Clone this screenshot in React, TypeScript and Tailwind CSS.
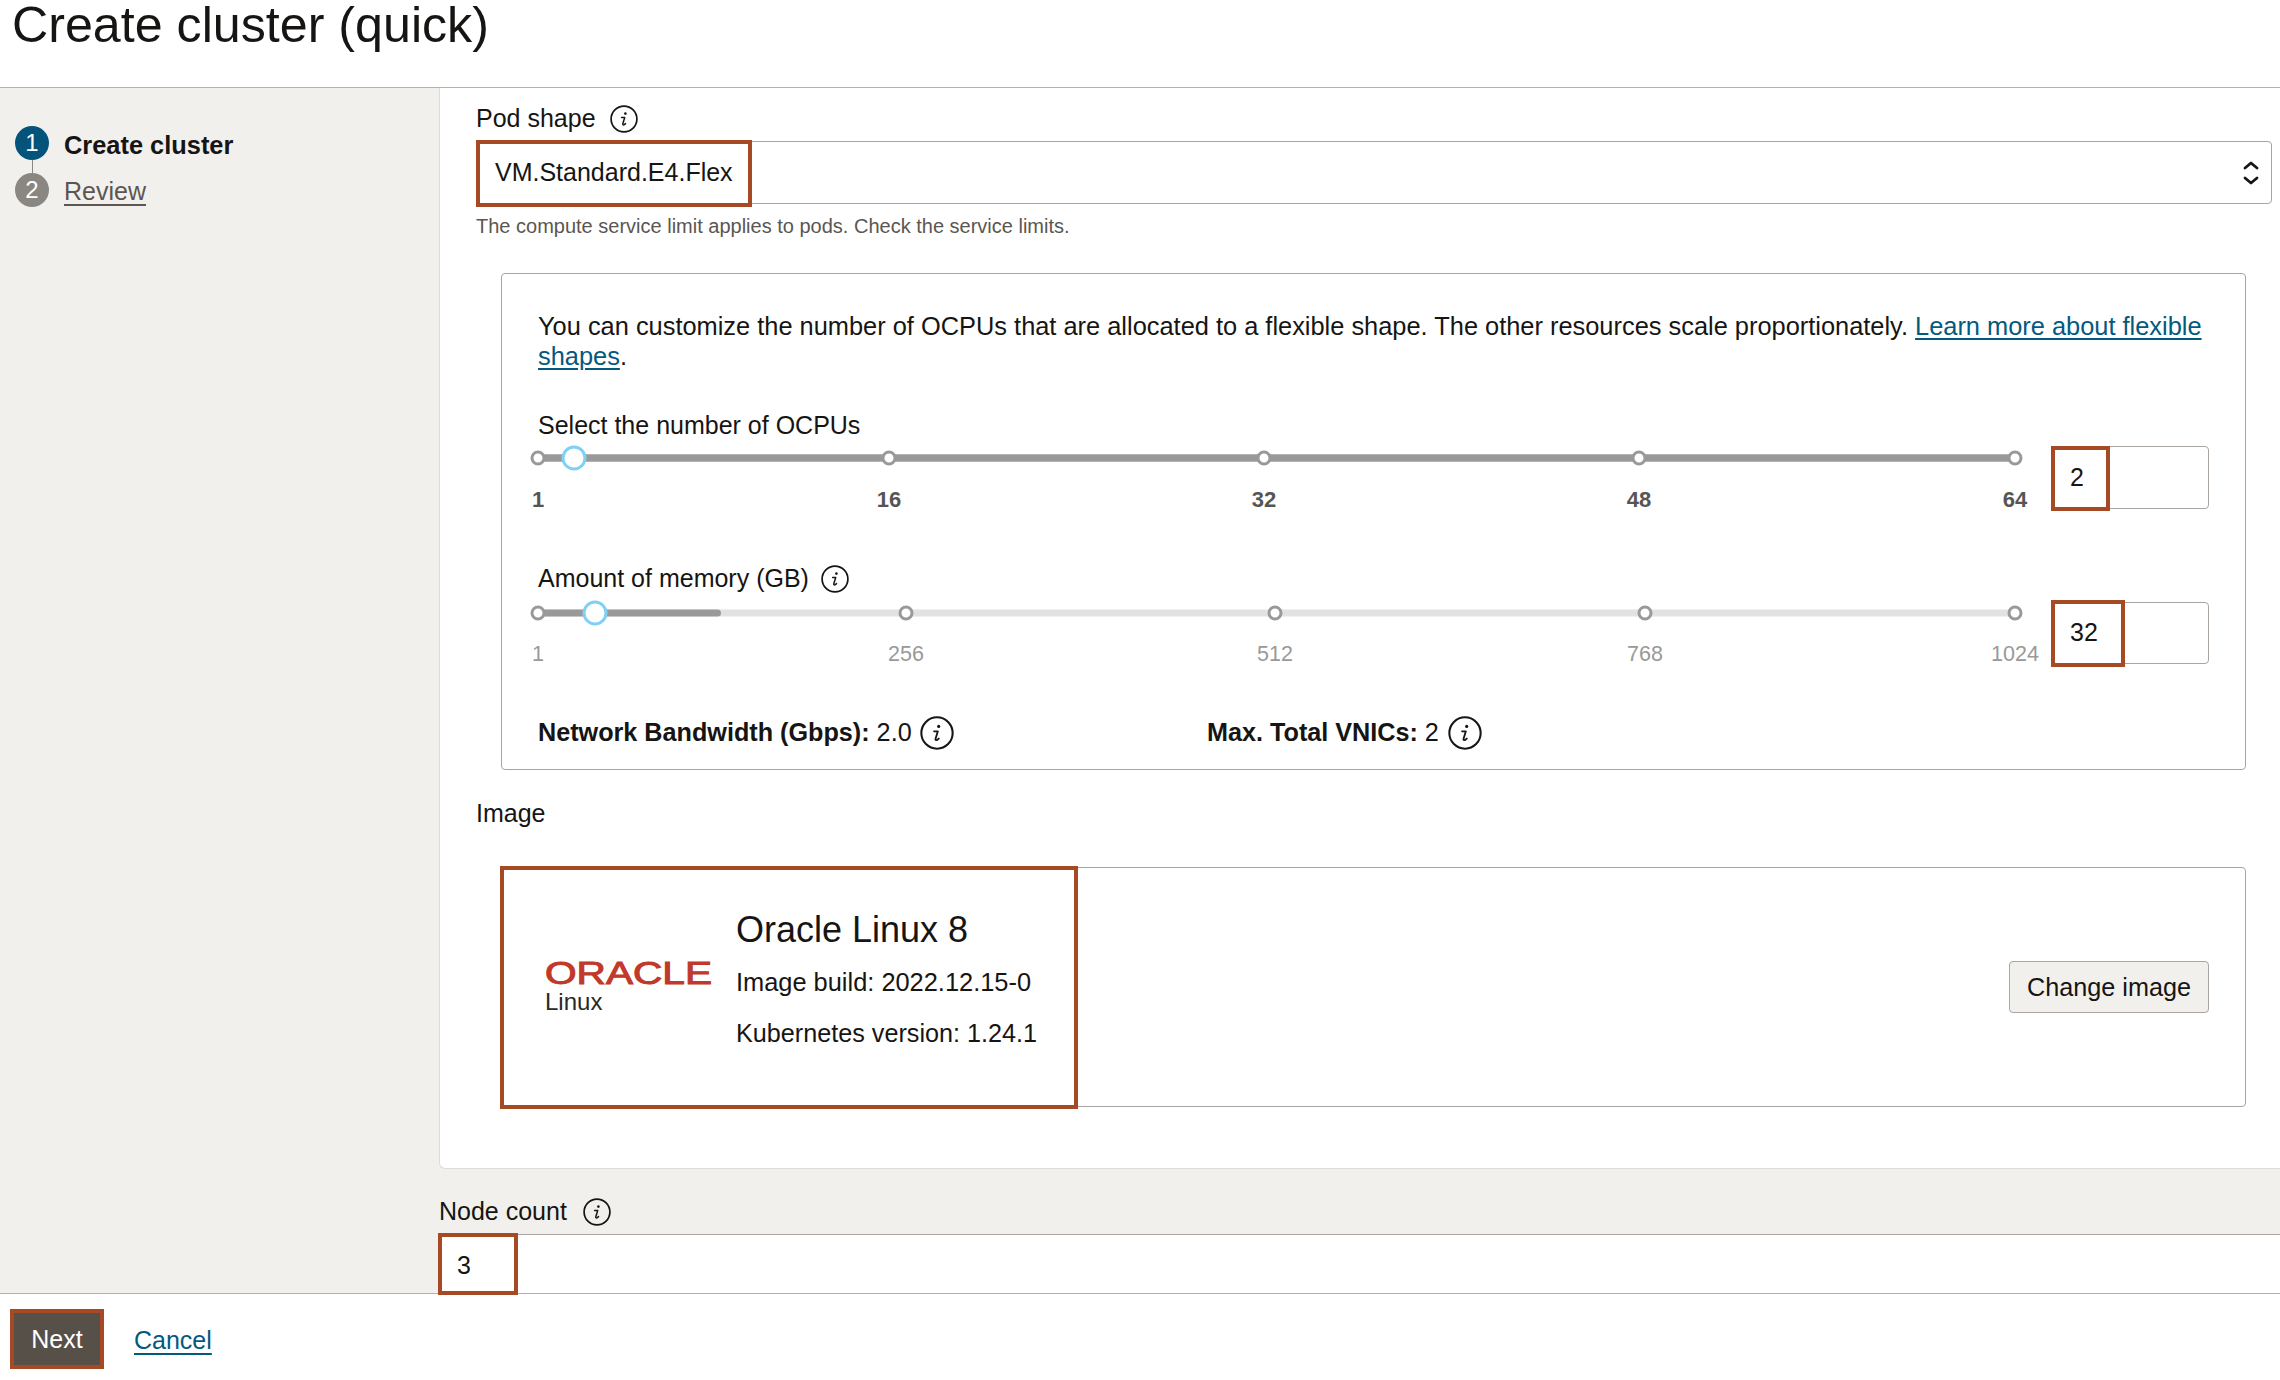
import { ReactNode } from "react";

const font = { fontFamily: '"Liberation Sans", Arial, sans-serif' };

function InfoIcon({ size = 28 }: { size?: number }) {
  return (
    <svg width={size} height={size} viewBox="0 0 28 28" fill="none" className="shrink-0">
      <circle cx="14" cy="14" r="12.9" stroke="#161513" strokeWidth="1.7" />
      <circle cx="15.4" cy="8.6" r="1.3" fill="#161513" />
      <path
        d="M11.6 12.6h3.1l-1.9 6.2c-.3 1.1.7 1.4 1.5.8l1.2-1"
        stroke="#161513"
        strokeWidth="1.5"
        strokeLinecap="round"
        strokeLinejoin="round"
      />
    </svg>
  );
}

// the brown boxes are annotations drawn over the form
function Mark({ className }: { className: string }) {
  return <div className={`absolute border-[4px] border-[#a54a24] pointer-events-none ${className}`} />;
}

function FieldLabel({ children, className }: { children: ReactNode; className?: string }) {
  return (
    <div className={`flex items-center h-[28px] text-[25px] text-[#161513] ${className ?? ""}`}>{children}</div>
  );
}

type SliderProps = {
  ticks: { label: string; at: number }[];
  thumb: number;
  fillEnd: number;
  trackClass: string;
  labelClass: string;
  center: string;
  labelTop: string;
};

const SLIDER_WIDTH = 1477;

function Slider({ ticks, thumb, fillEnd, trackClass, labelClass, center, labelTop }: SliderProps) {
  return (
    <div className="relative flex-1 h-full">
      <div className={`absolute left-0 right-0 h-[7px] rounded-full -translate-y-1/2 ${center} ${trackClass}`} />
      <div
        className={`absolute left-0 h-[7px] rounded-full bg-[#999999] -translate-y-1/2 ${center}`}
        style={{ width: fillEnd }}
      />
      {ticks.map((t) => (
        <div key={t.label}>
          <div
            className={`absolute w-[15px] h-[15px] rounded-full bg-white border-[3px] border-[#999999] -translate-x-1/2 -translate-y-1/2 ${center}`}
            style={{ left: t.at }}
          />
          <div className={`absolute -translate-x-1/2 -translate-y-1/2 ${labelTop} ${labelClass}`} style={{ left: t.at }}>
            {t.label}
          </div>
        </div>
      ))}
      <div
        className={`absolute w-[25px] h-[25px] rounded-full bg-white border-[3px] border-[#7fd0f5] -translate-x-1/2 -translate-y-1/2 ${center}`}
        style={{ left: thumb }}
      />
    </div>
  );
}

function NumberBox({ value, markClass }: { value: string; markClass: string }) {
  return (
    <div className="relative w-[157px] h-full bg-white border border-[#aaa5a0] rounded-[4px] flex items-center pl-[17px] text-[25px] text-[#161513]">
      {value}
      <Mark className={markClass} />
    </div>
  );
}

export default function App() {
  return (
    <div style={font} className="w-[2280px] h-[1380px] overflow-hidden flex flex-col bg-white text-[#161513]">
      <div className="h-[88px] shrink-0 border-b border-[#b5b1ad] pl-[12px]">
        <h1 className="text-[50.2px] leading-[50px] font-normal">Create cluster (quick)</h1>
      </div>

      <div className="flex h-[1205px] shrink-0 bg-[#f1f0ed]">
        <div className="w-[439px] shrink-0 pt-[38px] pl-[15px]">
          <div className="flex items-center gap-[15px] h-[34px]">
            <div className="w-[34px] h-[34px] rounded-full bg-[#04537a] text-white text-[24px] flex items-center justify-center">
              1
            </div>
            <div className="text-[25.4px] font-bold mt-[5px]">Create cluster</div>
          </div>
          <div className="ml-[17px] w-px h-[13px] bg-[#8b8783]" />
          <div className="flex items-center gap-[15px] h-[34px]">
            <div className="w-[34px] h-[34px] rounded-full bg-[#8a8682] text-white text-[24px] flex items-center justify-center">
              2
            </div>
            <a className="text-[25px] text-[#5b5652] underline underline-offset-[4px] mt-[3px]">Review</a>
          </div>
        </div>

        <div className="flex-1 min-w-0">
          <div className="bg-white border-l border-b border-[#dcdcdc] rounded-bl-[6px] pl-[36px] pr-[8px] pt-[17px] h-[1081px]">
            <FieldLabel className="gap-[14px]">
              Pod shape <InfoIcon />
            </FieldLabel>
            <div className="relative mt-[8px] h-[63px] border border-[#aaa5a0] rounded-[4px] flex items-center justify-between pl-[18px] pr-[12px] text-[25px]">
              VM.Standard.E4.Flex
              <svg width="16" height="26" viewBox="0 0 16 26" fill="none">
                <path d="M2 8l6-5 6 5M2 18l6 5 6-5" stroke="#161513" strokeWidth="2.8" strokeLinecap="round" strokeLinejoin="round" />
              </svg>
              <Mark className="-left-[1px] -top-[2px] w-[276px] h-[67px]" />
            </div>
            <div className="mt-[10px] h-[24px] leading-[24px] text-[20px] text-[#5b5652]">
              The compute service limit applies to pods. Check the service limits.
            </div>

            <div className="mt-[35px] ml-[25px] w-[1745px] h-[497px] border border-[#aaa5a0] rounded-[4px] pl-[36px] pr-[36px] pt-[37px]">
              <p className="text-[25.4px] leading-[30px]">
                You can customize the number of OCPUs that are allocated to a flexible shape. The other resources scale
                proportionately.{" "}
                <a className="text-[#04597f] underline underline-offset-[3px]">Learn more about flexible shapes</a>.
              </p>

              <FieldLabel className="mt-[41px]">Select the number of OCPUs</FieldLabel>
              <div className="mt-[6px] h-[63px] flex gap-[37px]">
                <Slider
                  ticks={[
                    { label: "1", at: 0 },
                    { label: "16", at: 351 },
                    { label: "32", at: 726 },
                    { label: "48", at: 1101 },
                    { label: "64", at: SLIDER_WIDTH },
                  ]}
                  thumb={36}
                  fillEnd={SLIDER_WIDTH}
                  trackClass="bg-[#999999]"
                  labelClass="text-[22px] font-bold text-[#555555]"
                  center="top-[12px]"
                  labelTop="top-[53px]"
                />
                <NumberBox value="2" markClass="-left-[2px] -top-[1px] w-[59px] h-[65px]" />
              </div>

              <FieldLabel className="mt-[56px] gap-[12px]">
                Amount of memory (GB) <InfoIcon />
              </FieldLabel>
              <div className="mt-[9px] h-[62px] flex gap-[37px]">
                <Slider
                  ticks={[
                    { label: "1", at: 0 },
                    { label: "256", at: 368 },
                    { label: "512", at: 737 },
                    { label: "768", at: 1107 },
                    { label: "1024", at: SLIDER_WIDTH },
                  ]}
                  thumb={57}
                  fillEnd={183}
                  trackClass="bg-[#e2e2e2]"
                  labelClass="text-[21.5px] text-[#999999]"
                  center="top-[11px]"
                  labelTop="top-[52px]"
                />
                <NumberBox value="32" markClass="-left-[2px] -top-[3px] w-[74px] h-[67px]" />
              </div>

              <div className="mt-[51px] h-[36px] flex items-center text-[25.2px]">
                <div className="w-[669px] flex items-center gap-[8px]">
                  <span>
                    <b>Network Bandwidth (Gbps):</b> 2.0
                  </span>
                  <InfoIcon size={34} />
                </div>
                <div className="flex items-center gap-[9px]">
                  <span>
                    <b>Max. Total VNICs:</b> 2
                  </span>
                  <InfoIcon size={34} />
                </div>
              </div>
            </div>

            <FieldLabel className="mt-[30px]">Image</FieldLabel>
            <div className="relative mt-[39px] ml-[25px] w-[1745px] h-[240px] border border-[#aaa5a0] rounded-[4px] flex items-center justify-between pr-[36px]">
              <div className="flex items-center pl-[43px]">
                <div className="w-[191px] pt-[6px]">
                  <svg width="167" height="32" viewBox="0 0 167 32" className="-mt-[8px]">
                    <text
                      x="0"
                      y="29"
                      textLength="167"
                      lengthAdjust="spacingAndGlyphs"
                      fontSize="31"
                      fill="#c1392b"
                      stroke="#c1392b"
                      strokeWidth="1"
                      fontFamily="Liberation Sans, Arial, sans-serif"
                    >
                      ORACLE
                    </text>
                  </svg>
                  <div className="text-[24px] leading-[30px] text-[#2b2a28]">Linux</div>
                </div>
                <div className="-mt-[11px]">
                  <div className="text-[36px] leading-[40px]">Oracle Linux 8</div>
                  <div className="mt-[12px] text-[25.4px] leading-[40px]">Image build: 2022.12.15-0</div>
                  <div className="mt-[11px] text-[25.2px] leading-[40px]">Kubernetes version: 1.24.1</div>
                </div>
              </div>
              <button className="w-[200px] h-[52px] pt-[2px] bg-[#f1f0ed] border border-[#aaa5a0] rounded-[4px] text-[25.2px]">
                Change image
              </button>
              <Mark className="-left-[2px] -top-[2px] w-[578px] h-[243px]" />
            </div>
          </div>

          <div className="pt-[29px]">
            <FieldLabel className="gap-[16px] text-[25.4px]">
              Node count <InfoIcon />
            </FieldLabel>
            <div className="relative mt-[8px] h-[59px] bg-white border-t border-[#aaa5a0] flex items-center pl-[18px] pt-[3px] text-[25px]">
              3
              <Mark className="-left-[1px] -top-[2px] w-[80px] h-[62px]" />
            </div>
          </div>
        </div>
      </div>

      <div className="flex-1 border-t border-[#b5b1ad] bg-white flex items-start pl-[10px] pt-[15px] gap-[30px] text-[25px]">
        <button className="w-[94px] h-[60px] pt-[2px] bg-[#575048] border-[4px] border-[#a54a24] text-white">Next</button>
        <a className="mt-[13px] text-[#04597f] underline underline-offset-[4px]">Cancel</a>
      </div>
    </div>
  );
}
